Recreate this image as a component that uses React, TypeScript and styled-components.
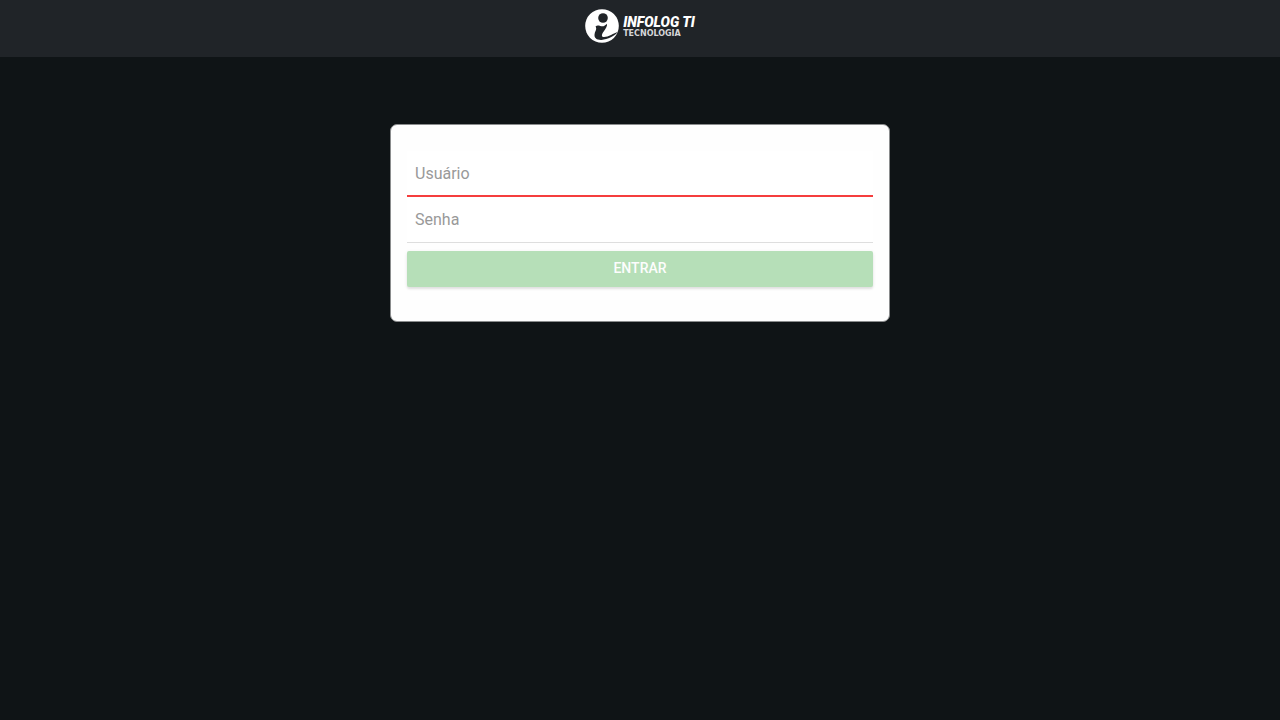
import React, { useState } from "react";
import styled, { createGlobalStyle } from "styled-components";

const GlobalStyle = createGlobalStyle`
  *, *::before, *::after { box-sizing: border-box; }
  body {
    margin: 0;
    background: #0f1416;
    font-family: Roboto, "Liberation Sans", sans-serif;
  }
`;

const Page = styled.div`
  min-height: 100vh;
  display: flex;
  flex-direction: column;
`;

const Header = styled.header`
  display: flex;
  justify-content: center;
  padding: 8px 16px 13px;
  background: #202428;
`;

const Brand = styled.a`
  display: flex;
  align-items: center;
  gap: 4px;
  color: #fff;
  text-decoration: none;
`;

const BrandMark = styled.svg`
  display: block;
  width: 34px;
  height: 36px;
`;

const BrandText = styled.span`
  display: flex;
  flex-direction: column;
  gap: 2px;
  padding-top: 2px;
  white-space: nowrap;
`;

const BrandName = styled.span`
  font-size: 14px;
  line-height: 12px;
  font-weight: 900;
  font-style: italic;
`;

const BrandTagline = styled.span`
  font-family: "DejaVu Sans", sans-serif;
  font-size: 8px;
  line-height: 8px;
  font-weight: 700;
  color: #d5d6d8;
`;

const Main = styled.main`
  flex: 1;
  padding: 67px 16px 16px;
`;

const Card = styled.form`
  max-width: 500px;
  margin: 0 auto;
  padding: 26px 16px 34px;
  border: 1px solid #8a8c8d;
  border-radius: 7px;
  background: #fefefe;
`;

const Field = styled.input<{ $invalid?: boolean }>`
  display: block;
  width: 100%;
  height: 46px;
  padding: 0 8px;
  border: 0;
  border-bottom: ${(p) => (p.$invalid ? "2px solid #f53d3d" : "1px solid #dedede")};
  border-radius: 0;
  outline: none;
  background: #fff;
  color: #000;
  font-family: inherit;
  font-size: 16px;

  &::placeholder {
    color: #999;
    opacity: 1;
  }
`;

const SubmitButton = styled.button`
  display: block;
  width: 100%;
  height: 36px;
  margin-top: 8px;
  padding: 0 8px 2px;
  border: 0;
  border-radius: 2px;
  background: #b6dfb8;
  box-shadow: 0 2px 2px rgba(0, 0, 0, 0.08), 0 1px 4px rgba(0, 0, 0, 0.07);
  color: #fdfdfd;
  font-family: inherit;
  font-size: 14px;
  font-weight: 500;
  text-transform: uppercase;
`;

function Logo() {
  return (
    <Brand href="#" aria-label="Infolog TI Tecnologia">
      <BrandMark viewBox="0 0 34 36" aria-hidden="true">
        <circle cx="17" cy="18" r="16.8" fill="#fff" />
        <circle cx="18" cy="10" r="4.8" fill="#202428" />
        <path
          d="M10.5 18.5C13 16.2 16 19 18.5 18.2C20.5 17.5 21.5 16.2 22 15.8C22.6 18 20.5 21 18.7 23.5C16.5 26.5 16.3 28.6 18.3 29C22.5 29.6 28.5 25.5 33 23.8C30 27.8 22.5 31.5 16.5 31.9C11.8 32.1 9.3 30 9.5 26.7C9.7 24.2 11.2 22.5 11.2 20.6C11.2 19.6 10.8 19 10.5 18.5Z"
          fill="#202428"
        />
      </BrandMark>
      <BrandText>
        <BrandName>INFOLOG TI</BrandName>
        <BrandTagline>TECNOLOGIA</BrandTagline>
      </BrandText>
    </Brand>
  );
}

export default function App() {
  const [user, setUser] = useState("");
  const [password, setPassword] = useState("");

  return (
    <Page>
      <GlobalStyle />
      <Header>
        <Logo />
      </Header>
      <Main>
        <Card onSubmit={(e) => e.preventDefault()}>
          <Field
            $invalid={user === ""}
            type="text"
            aria-label="Usuário"
            placeholder="Usuário"
            value={user}
            onChange={(e) => setUser(e.target.value)}
          />
          <Field
            type="password"
            aria-label="Senha"
            placeholder="Senha"
            value={password}
            onChange={(e) => setPassword(e.target.value)}
          />
          <SubmitButton type="submit" disabled={!user || !password}>
            Entrar
          </SubmitButton>
        </Card>
      </Main>
    </Page>
  );
}
